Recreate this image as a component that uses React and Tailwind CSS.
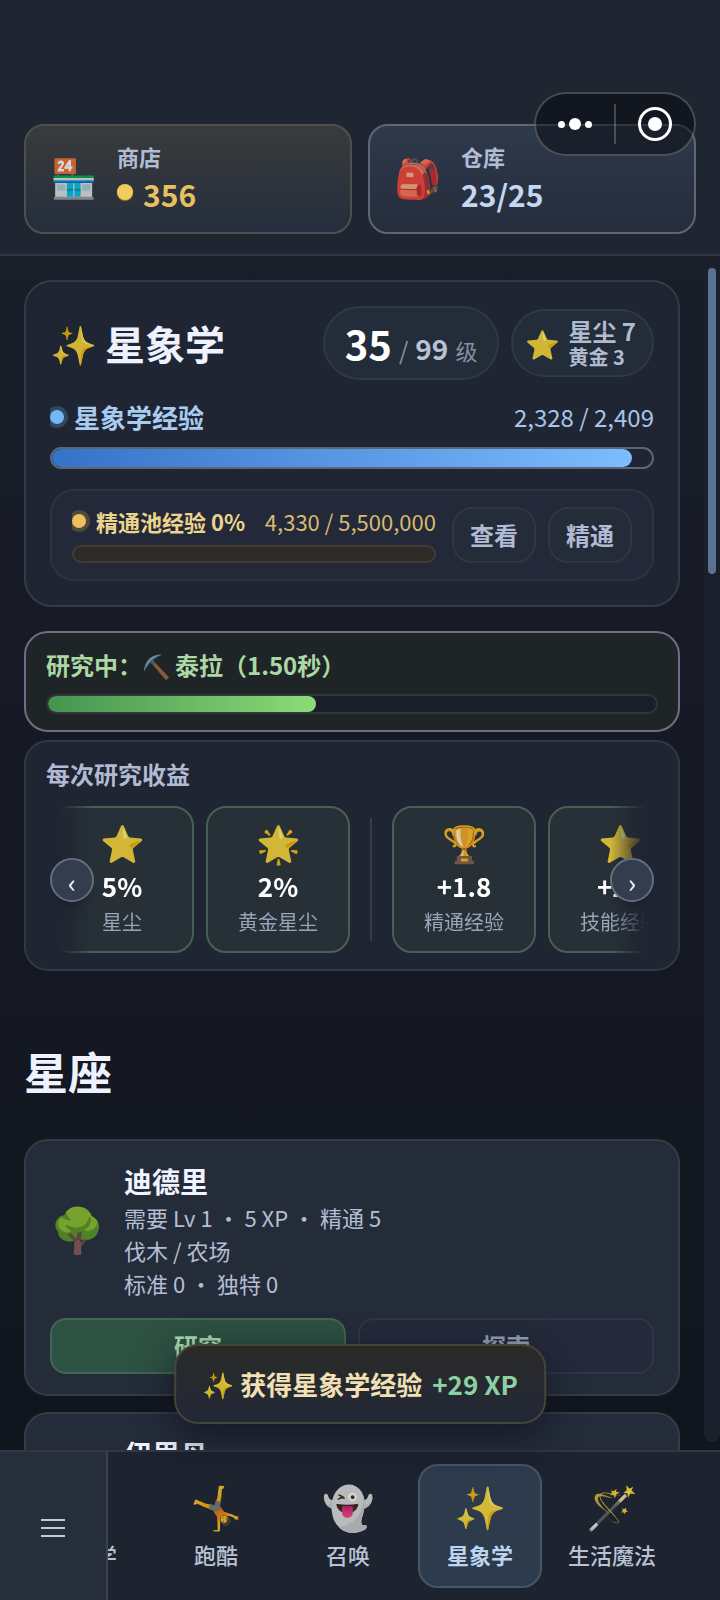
import React from 'react';
import clsx from 'clsx';

const resources = [
  { icon: '🏪', label: '商店', value: '356', gold: true },
  { icon: '🎒', label: '仓库', value: '23/25', gold: false },
];

const rewards = [
  { icon: '⭐', value: '5%', label: '星尘' },
  { icon: '🌟', value: '2%', label: '黄金星尘' },
  { divider: true },
  { icon: '🏆', value: '+1.8', label: '精通经验' },
  { icon: '⭐', value: '+29', label: '技能经验' },
];

const constellations = [
  {
    icon: '🌳',
    name: '迪德里',
    lines: ['需要 Lv 1 · 5 XP · 精通 5', '伐木 / 农场', '标准 0 · 独特 0'],
  },
  {
    icon: '🐟',
    name: '伊里丹',
    lines: ['需要 Lv 1 · 5 XP · 精通 5', '钓鱼 / 烹饪', '标准 0 · 独特 0'],
  },
];

const skills = [
  { icon: '🌿', name: '草药学' },
  { icon: '🤸', name: '跑酷' },
  { icon: '👻', name: '召唤' },
  { icon: '✨', name: '星象学', active: true },
  { icon: '🪄', name: '生活魔法' },
];

const Emoji = ({ children, className }) => (
  <span aria-hidden="true" className={clsx('flex-shrink-0 font-normal opacity-80', className)}>
    {children}
  </span>
);

const ResourceCard = ({ icon, label, value, gold }) => (
  <button
    className={clsx(
      'flex flex-1 items-center gap-5 h-[110px] px-6 pb-[2px] rounded-[20px] border-2 text-left bg-linear-to-b',
      gold ? 'border-[#4f504e] from-[#393b3b] to-[#252e3d]' : 'border-[#5d6776] from-[#2e394b] to-[#262d3c]'
    )}
  >
    <Emoji className="mb-1 text-[38px] leading-[44px]">{icon}</Emoji>
    <span className="flex flex-col">
      <span className="text-[22px] leading-8 font-bold text-[#b0bcd4]">{label}</span>
      <span
        className={clsx(
          'flex items-center gap-2.5 text-[30px] leading-[44px] font-bold',
          gold ? 'text-[#e8c060]' : 'text-[#c4d8f4]'
        )}
      >
        {gold && <span className="w-4 h-4 mb-1 rounded-full bg-[#f0cc5c] shadow-[0_1px_1px_#a07820]" />}
        {value}
      </span>
    </span>
  </button>
);

const Capsule = () => (
  <div className="absolute right-6 top-[92px] flex items-center w-[162px] h-16 rounded-full border-2 border-[#ffffff38] bg-[#05080c80]">
    <button aria-label="更多" className="flex flex-1 items-center justify-center gap-1">
      <span className="w-[7px] h-[7px] rounded-full bg-white" />
      <span className="w-3 h-3 rounded-full bg-white" />
      <span className="w-[7px] h-[7px] rounded-full bg-white" />
    </button>
    <span className="w-[2px] h-10 bg-[#ffffff38]" />
    <button aria-label="关闭" className="flex flex-1 items-center justify-center">
      <span className="flex items-center justify-center w-[34px] h-[34px] rounded-full border-[3px] border-white">
        <span className="w-[14px] h-[14px] rounded-full bg-white" />
      </span>
    </button>
  </div>
);

const SkillCard = () => (
  <section className="rounded-[28px] border-2 border-[#343b48] bg-[#1f2532] p-6">
    <div className="flex items-center h-[74px]">
      <h1 className="flex items-center gap-2 text-[40px] leading-[56px] font-bold text-[#eef2ff]">
        <Emoji className="text-[38px]">✨</Emoji>
        星象学
      </h1>
      <div className="ml-auto flex items-baseline gap-[7px] h-[74px] px-5 rounded-full border-2 border-[#303845] bg-[#232c39]">
        <span className="text-[40px] leading-[70px] font-bold text-white">35</span>
        <span className="text-[24px] text-[#8490a6]">/</span>
        <span className="text-[28px] font-bold text-[#b8c2d4]">99</span>
        <span className="text-[22px] text-[#8490a6]">级</span>
      </div>
      <div className="ml-3 flex items-center gap-2 h-[68px] pl-3 pr-4 rounded-full border-2 border-[#303845] bg-[#232c39] text-[#b0bbd2] font-bold">
        <Emoji className="text-[28px] leading-8">⭐</Emoji>
        <div>
          <div className="text-[24px] leading-[28px]">星尘 7</div>
          <div className="text-[20px] leading-[24px]">黄金 3</div>
        </div>
      </div>
    </div>

    <div className="mt-5 flex items-center h-[34px] overflow-hidden">
      <span className="w-3.5 h-3.5 rounded-full bg-[#74b8f8] shadow-[0_0_0_4px_#304860]" />
      <span className="ml-2.5 text-[26px] leading-[34px] font-bold text-[#a8ccf0]">星象学经验</span>
      <span className="ml-auto text-[24px] leading-[34px] text-[#a8c4e8]">2,328 / 2,409</span>
    </div>
    <div className="mt-[13px] h-[22px] rounded-full border-2 border-[#5c6676] overflow-hidden">
      <div className="h-full rounded-full bg-linear-to-r from-[#3474c8] to-[#7cbcff]" style={{ width: '96.6%' }} />
    </div>

    {/* Mastery pool */}
    <div className="mt-5 flex items-center gap-4 h-[92px] px-5 rounded-[24px] border-2 border-[#2c3341] bg-[#232938]">
      <div className="flex-1">
        <div className="flex items-center h-7 text-[22px] leading-7 text-[#d8ba70] overflow-hidden">
          <span className="w-3.5 h-3.5 rounded-full bg-[#ecc05c] shadow-[0_0_0_4px_#504838]" />
          <span className="ml-2.5 font-bold text-[#ecd48c]">精通池经验 0%</span>
          <span className="ml-auto">4,330 / 5,500,000</span>
        </div>
        <div className="mt-2.5 h-[18px] rounded-full border-2 border-[#403d38] bg-[#2e2a26]" />
      </div>
      <div className="flex gap-3">
        {['查看', '精通'].map((text) => (
          <button
            key={text}
            className="w-[84px] h-14 rounded-[20px] border-2 border-[#303744] bg-[#242c3a] text-[24px] font-bold text-[#b0bad2]"
          >
            {text}
          </button>
        ))}
      </div>
    </div>
  </section>
);

const ResearchStatus = () => (
  <section className="mt-6 h-[101px] rounded-[24px] border-2 border-[#6c7084] bg-[#1f2527] px-5 pt-3.5">
    <div className="flex items-center h-9 text-[24px] font-bold text-[#acd8a6]">
      研究中：
      <Emoji className="text-[23px] leading-8">⛏️</Emoji>
      <span className="ml-1">泰拉（1.50秒）</span>
    </div>
    <div className="mt-[11px] h-5 rounded-full border-2 border-[#30363c] bg-[#1a1e2a] overflow-hidden">
      <div className="h-full rounded-full bg-linear-to-r from-[#449450] to-[#8cdc78]" style={{ width: '44%' }} />
    </div>
  </section>
);

const ArrowButton = ({ label, className, children }) => (
  <button
    aria-label={label}
    className={clsx(
      'absolute top-[116px] w-11 h-11 pt-1 rounded-full border-2 border-[#646e80] bg-[#343d4e] text-[26px] leading-none text-white shadow-lg',
      className
    )}
  >
    {children}
  </button>
);

const Rewards = () => (
  <section className="relative mt-2 h-[231px] rounded-[24px] border-2 border-[#303844] bg-[#1f2532] px-5 pt-3.5">
    <h2 className="text-[24px] leading-9 font-bold text-[#b0bad2]">每次研究收益</h2>
    <div className="mt-3.5 mx-3 flex gap-3 overflow-hidden mask-x-from-94% mask-x-to-100%">
      {rewards.map((item, i) =>
        item.divider ? (
          <span key={i} className="w-[2px] my-3 mx-2 flex-shrink-0 bg-[#363c4c]" />
        ) : (
          <div
            key={i}
            className={clsx(
              'flex flex-col items-center w-36 h-[147px] pt-3 flex-shrink-0 rounded-[20px] border-2 border-[#486054] bg-[#273036]',
              i === 0 && '-ml-2'
            )}
          >
            <Emoji className="text-[36px] leading-[42px]">{item.icon}</Emoji>
            <span className="mt-1.5 text-[26px] leading-9 font-bold text-white">{item.value}</span>
            <span className="text-[20px] leading-9 text-[#98a4b8]">{item.label}</span>
          </div>
        )
      )}
    </div>
    <ArrowButton label="上一个" className="left-6">‹</ArrowButton>
    <ArrowButton label="下一个" className="right-6">›</ArrowButton>
  </section>
);

const ConstellationCard = ({ icon, name, lines }) => (
  <article className="mb-4 rounded-[24px] border-2 border-[#343c48] bg-[#242c3a] px-6 py-5">
    <div className="flex items-center">
      <Emoji className="w-[74px] mb-2 text-[44px] leading-[52px]">{icon}</Emoji>
      <div>
        <h3 className="text-[28px] leading-10 font-bold text-[#f0f4ff]">{name}</h3>
        {lines.map((line) => (
          <p key={line} className="text-[22px] leading-[33px] text-[#b4bed2]">
            {line}
          </p>
        ))}
      </div>
    </div>
    <div className="mt-[18px] flex gap-3 text-[24px] font-bold">
      <button className="flex-1 h-14 rounded-[16px] border-2 border-[#466454] bg-[#2d5142] text-[#a8dcae]">研究</button>
      <button className="flex-1 h-14 rounded-[16px] border-2 border-[#303644] bg-[#242a3b] text-[#98a2b8]">探索</button>
    </div>
  </article>
);

const Toast = () => (
  <div
    role="status"
    className="absolute left-1/2 bottom-[26px] -translate-x-1/2 flex items-center h-20 px-[26px] pb-[2px] rounded-[24px] border-2 border-[#464338] bg-linear-to-b from-[#2b2a28] to-[#212836] text-[26px] font-bold whitespace-nowrap text-[#f0e0b4] shadow-[0_12px_36px_#10141ecc]"
  >
    <Emoji>✨</Emoji>
    <span className="ml-1.5">获得星象学经验</span>
    <span className="ml-2.5 text-[#8cd0a4]">+29 XP</span>
  </div>
);

const BottomNav = () => (
  <nav className="flex h-[150px] flex-shrink-0 border-t-2 border-[#303743] bg-[#1d232f]">
    <button
      aria-label="菜单"
      className="flex flex-col items-center justify-center gap-1.5 w-[108px] flex-shrink-0 border-r-2 border-[#3a424e] bg-[#262e3c] pt-1"
    >
      <span className="w-6 h-[2px] bg-[#c0cadc]" />
      <span className="w-6 h-[2px] bg-[#c0cadc]" />
      <span className="w-6 h-[2px] bg-[#c0cadc]" />
    </button>
    <div className="flex flex-1 gap-2 pt-3 overflow-hidden">
      {skills.map(({ icon, name, active }, i) => (
        <button
          key={name}
          className={clsx(
            'flex flex-col items-center w-[124px] h-[124px] pt-3.5 flex-shrink-0 rounded-[20px] border-2 text-[22px] leading-8',
            active ? 'border-[#46566a] bg-[#2e3b4d] font-bold text-[#bcd4f0]' : 'border-transparent font-medium text-[#b8c2d4]',
            i === 0 && '-ml-[86px]'
          )}
        >
          <Emoji className="text-[42px] leading-[50px]">{icon}</Emoji>
          <span className="mt-2">{name}</span>
        </button>
      ))}
    </div>
  </nav>
);

export default function App() {
  return (
    <div className="relative flex flex-col h-screen overflow-hidden bg-linear-to-b from-[#1b202c] via-[#161923] to-[#10151d] font-['Noto_Sans_CJK_SC',sans-serif]">
      <header className="flex gap-4 px-6 pt-[124px] pb-5 flex-shrink-0 border-b-2 border-[#303744] bg-[#1f2632]">
        {resources.map((item) => (
          <ResourceCard key={item.label} {...item} />
        ))}
      </header>
      <Capsule />

      <div className="relative flex flex-1 min-h-0">
        <main className="flex-1 min-w-0 overflow-hidden px-6 pt-6">
          <SkillCard />
          <ResearchStatus />
          <Rewards />
          <h2 className="mt-[68px] mb-9 text-[44px] leading-[64px] font-bold text-[#eef2ff]">星座</h2>
          {constellations.map((item) => (
            <ConstellationCard key={item.name} {...item} />
          ))}
        </main>
        <div className="w-4 my-2 p-1 rounded-full bg-[#1b212c]">
          <div className="h-[306px] rounded-full bg-[#5a7290]" />
        </div>
        <Toast />
      </div>
      <BottomNav />
    </div>
  );
}
